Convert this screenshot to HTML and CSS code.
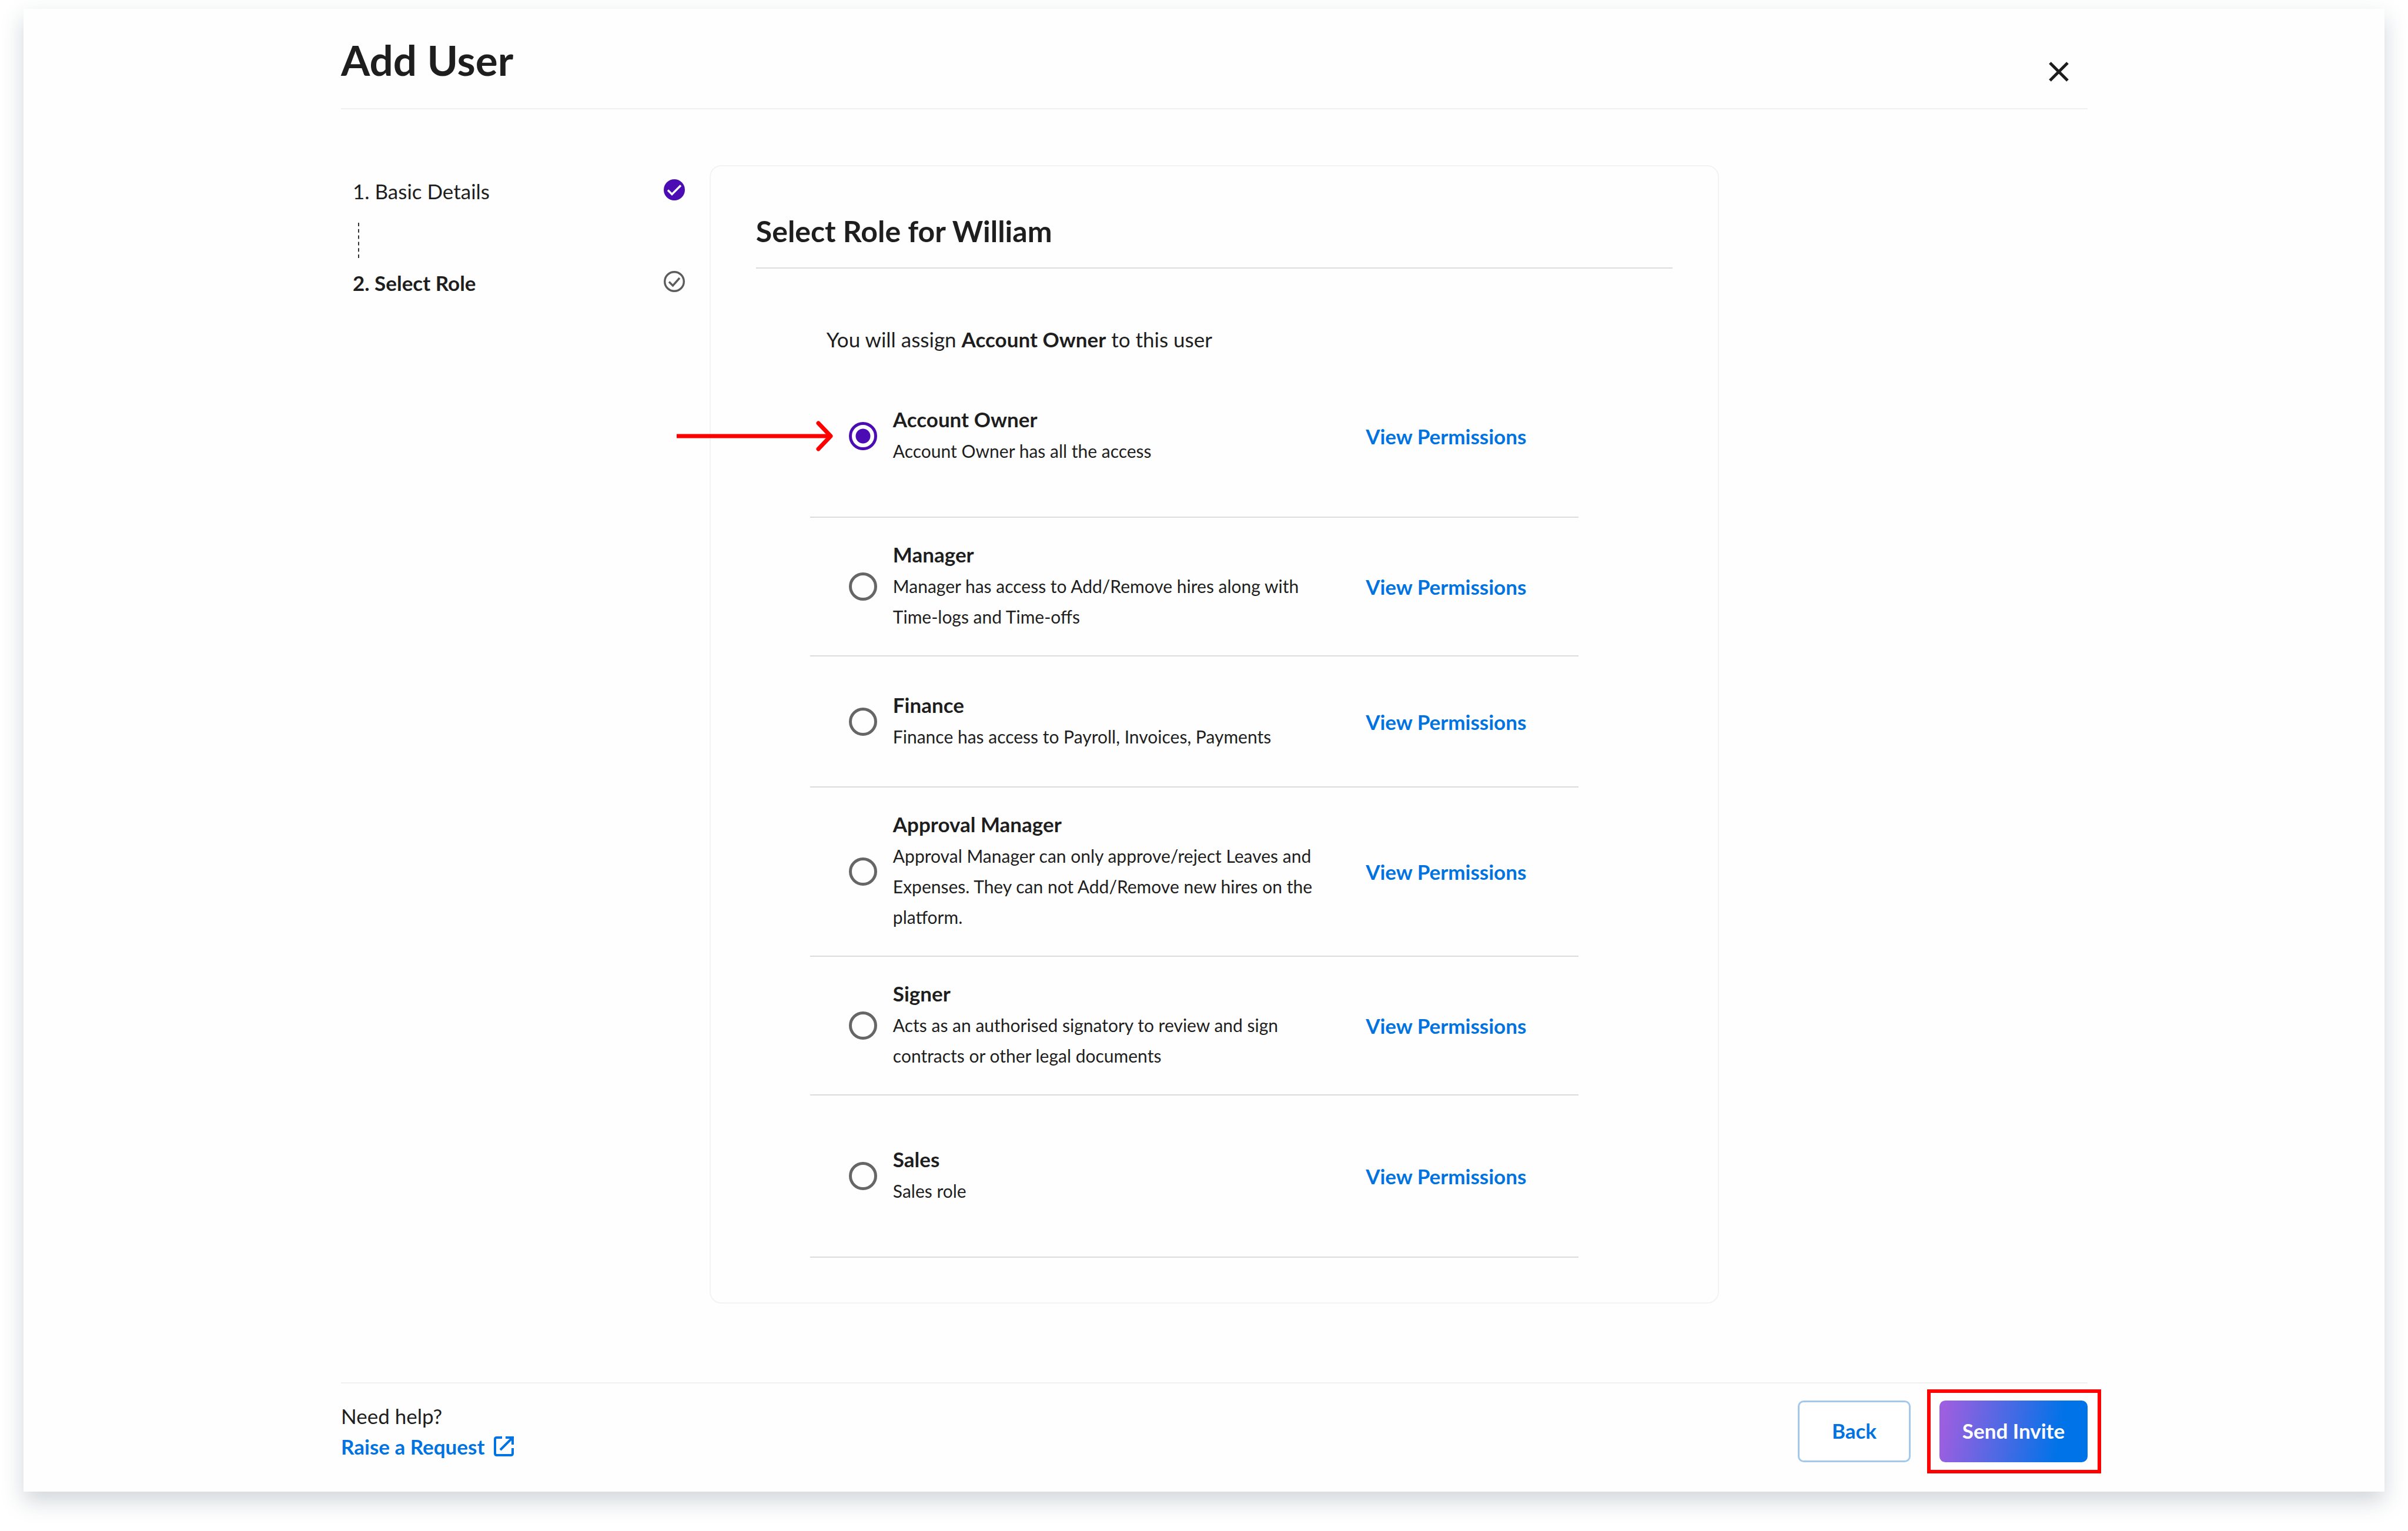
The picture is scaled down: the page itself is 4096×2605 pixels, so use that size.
FILE: index.html
```html
<!DOCTYPE html>
<html lang="en">
<head>
  <meta charset="UTF-8">
  <meta name="viewport" content="width=device-width, initial-scale=1.0">
  <title>Add User</title>
  <link rel="stylesheet" href="styles.css">
</head>
<body>
  <div class="modal">
    <header class="modal-header">
      <h1>Add User</h1>
      <button type="button" class="close-btn" aria-label="Close">
        <svg viewBox="0 0 34 34"><path d="M2 2L32 32M32 2L2 32" fill="none" stroke="#1c1c1c" stroke-width="5"/></svg>
      </button>
    </header>

    <main class="modal-body">
      <ol class="steps">
        <li class="step">
          <span>1. Basic Details</span>
          <svg class="step-icon" viewBox="0 0 36 36">
            <circle cx="18" cy="18" r="18" fill="#4b0db3"/>
            <path d="M7 18.500L14 25.500L29 10.500" fill="none" stroke="#fff" stroke-width="3.4"/>
          </svg>
        </li>
        <li class="step-line" aria-hidden="true"></li>
        <li class="step active">
          <span>2. Select Role</span>
          <svg class="step-icon" viewBox="0 0 36 36">
            <circle cx="18" cy="18" r="16.3" fill="none" stroke="#5c5c5c" stroke-width="3.4"/>
            <path d="M9 18.500L15.500 25L27 12" fill="none" stroke="#5c5c5c" stroke-width="3.4"/>
          </svg>
        </li>
      </ol>

      <section class="card">
        <h2>Select Role for William</h2>
        <form class="roles" id="roleForm">
          <p class="summary">You will assign <strong>Account Owner</strong> to this user</p>

          <div class="role tall">
            <svg class="arrow" viewBox="0 0 266 52">
              <path d="M0 26H262" fill="none" stroke="#f00" stroke-width="7"/>
              <path d="M241 4L262 26L241 48" fill="none" stroke="#f00" stroke-width="7" stroke-linecap="round" stroke-linejoin="round"/>
            </svg>
            <input type="radio" name="role" id="owner" checked>
            <label for="owner">
              <span class="role-name">Account Owner</span>
              <span class="role-desc">Account Owner has all the access</span>
            </label>
            <a href="#">View Permissions</a>
          </div>

          <div class="role">
            <input type="radio" name="role" id="manager">
            <label for="manager">
              <span class="role-name">Manager</span>
              <span class="role-desc">Manager has access to Add/Remove hires along with Time-logs and Time-offs</span>
            </label>
            <a href="#">View Permissions</a>
          </div>

          <div class="role">
            <input type="radio" name="role" id="finance">
            <label for="finance">
              <span class="role-name">Finance</span>
              <span class="role-desc">Finance has access to Payroll, Invoices, Payments</span>
            </label>
            <a href="#">View Permissions</a>
          </div>

          <div class="role">
            <input type="radio" name="role" id="approval">
            <label for="approval">
              <span class="role-name">Approval Manager</span>
              <span class="role-desc">Approval Manager can only approve/reject Leaves and Expenses. They can not Add/Remove new hires on the platform.</span>
            </label>
            <a href="#">View Permissions</a>
          </div>

          <div class="role">
            <input type="radio" name="role" id="signer">
            <label for="signer">
              <span class="role-name">Signer</span>
              <span class="role-desc">Acts as an authorised signatory to review and sign contracts or other legal documents</span>
            </label>
            <a href="#">View Permissions</a>
          </div>

          <div class="role tall">
            <input type="radio" name="role" id="sales">
            <label for="sales">
              <span class="role-name">Sales</span>
              <span class="role-desc">Sales role</span>
            </label>
            <a href="#">View Permissions</a>
          </div>
        </form>
      </section>
    </main>

    <footer class="modal-footer">
      <div class="help">
        <p>Need help?</p>
        <a href="#">Raise a Request
          <svg viewBox="0 0 34 34">
            <path d="M14 2H5Q2 2 2 5V29Q2 32 5 32H29Q32 32 32 29V20M20 2H32V14M31 3L11 23" fill="none" stroke="#0073e0" stroke-width="4"/>
          </svg>
        </a>
      </div>
      <div class="actions">
        <button type="button" class="btn btn-back">Back</button>
        <div class="highlight">
          <button type="submit" form="roleForm" class="btn btn-send">Send Invite</button>
        </div>
      </div>
    </footer>
  </div>
</body>
</html>
```

FILE: styles.css
```css
* {
  box-sizing: border-box;
}
body {
  margin: 0;
  padding: 15px 40px 67px;
  min-height: 100vh;
  display: flex;
  background: #fff;
  color: #1e1e1e;
  font-family: Lato, 'Liberation Sans', sans-serif;
  font-size: 35px;
  line-height: 52px;
}
h1, h2, p, ol {
  margin: 0;
  padding: 0;
}
a {
  color: #0073e0;
  font-weight: 700;
  text-decoration: none;
}
button {
  font-family: inherit;
  cursor: pointer;
}
.modal {
  flex: 1;
  display: flex;
  flex-direction: column;
  padding: 0 505px 0 540px;
  background: #fefefe;
  box-shadow: 0 16px 36px rgba(40, 65, 80, 0.22);
}

/* header */
.modal-header {
  display: flex;
  justify-content: space-between;
  align-items: center;
  height: 171px;
  padding-right: 32px;
  border-bottom: 2px solid #f0f0f0;
}
h1 {
  padding-top: 4px;
  font-size: 71px;
  line-height: 80px;
}
.close-btn {
  margin-top: 45px;
  width: 34px;
  height: 34px;
  padding: 0;
  border: none;
  background: none;
}
.close-btn svg {
  display: block;
}

/* steps + card */
.modal-body {
  display: grid;
  grid-template-columns: 73fr 200fr 73fr;
  align-items: start;
  padding: 95px 0;
}
.steps {
  list-style: none;
  padding: 18px 42px 0 20px;
}
.step {
  display: flex;
  justify-content: space-between;
  align-items: flex-start;
}
.step.active {
  font-weight: 700;
}
.step-icon {
  width: 36px;
  height: 36px;
  margin-top: 6px;
}
.step-line {
  height: 60px;
  margin: 28px 0 16px 9px;
  border-left: 2px dashed #333;
}
.card {
  border: 2px solid #f3f3f3;
  border-radius: 20px;
  padding: 78px 77px 76px;
}
h2 {
  font-size: 50px;
  line-height: 64px;
  padding-bottom: 30px;
  border-bottom: 2px solid #dcdcdc;
}
.roles {
  padding: 0 160px 0 92px;
}
.summary {
  padding: 94px 0 2px 28px;
}
.role {
  position: relative;
  display: grid;
  grid-template-columns: 48px 1fr 362px;
  column-gap: 27px;
  align-items: center;
  min-height: 223px;
  padding: 36px 0 36px 66px;
  border-bottom: 2px solid #dcdcdc;
}
.role.tall {
  min-height: 276px;
}
.role input {
  appearance: none;
  width: 48px;
  height: 48px;
  margin: 0;
  border: 5px solid #666;
  border-radius: 50%;
}
.role input:checked {
  border-color: #4b0db3;
  background: radial-gradient(circle, #4b0db3 12px, transparent 13px);
}
.role label {
  max-width: 740px;
  padding-bottom: 4px;
}
.role-name {
  display: block;
  margin-bottom: 2px;
  font-weight: 700;
}
.role-desc {
  display: block;
  font-size: 30px;
}
.arrow {
  position: absolute;
  left: -227px;
  top: 111px;
  width: 266px;
  height: 52px;
}

/* footer */
.modal-footer {
  display: flex;
  justify-content: space-between;
  align-items: flex-start;
  margin-top: auto;
  height: 186px;
  padding-top: 29px;
  border-top: 2px solid #f0f0f0;
}
.help a {
  display: flex;
  align-items: center;
  gap: 16px;
}
.help svg {
  width: 34px;
  height: 34px;
}
.actions {
  display: flex;
  gap: 49px;
}
.btn {
  height: 105px;
  padding: 0 0 4px;
  border-radius: 10px;
  font-size: 35px;
  font-weight: 700;
}
.btn-back {
  width: 192px;
  border: 3px solid #a3c8ec;
  background: #fff;
  color: #0073e0;
}
.btn-send {
  width: 252px;
  border: none;
  background: linear-gradient(100deg, #9b5fe0 5%, #0073e8 80%);
  color: #fff;
}
.highlight {
  position: relative;
}
.highlight::after {
  content: "";
  position: absolute;
  inset: -19px -23px -19px -21px;
  border: 6px solid #f00;
  pointer-events: none;
}
```
